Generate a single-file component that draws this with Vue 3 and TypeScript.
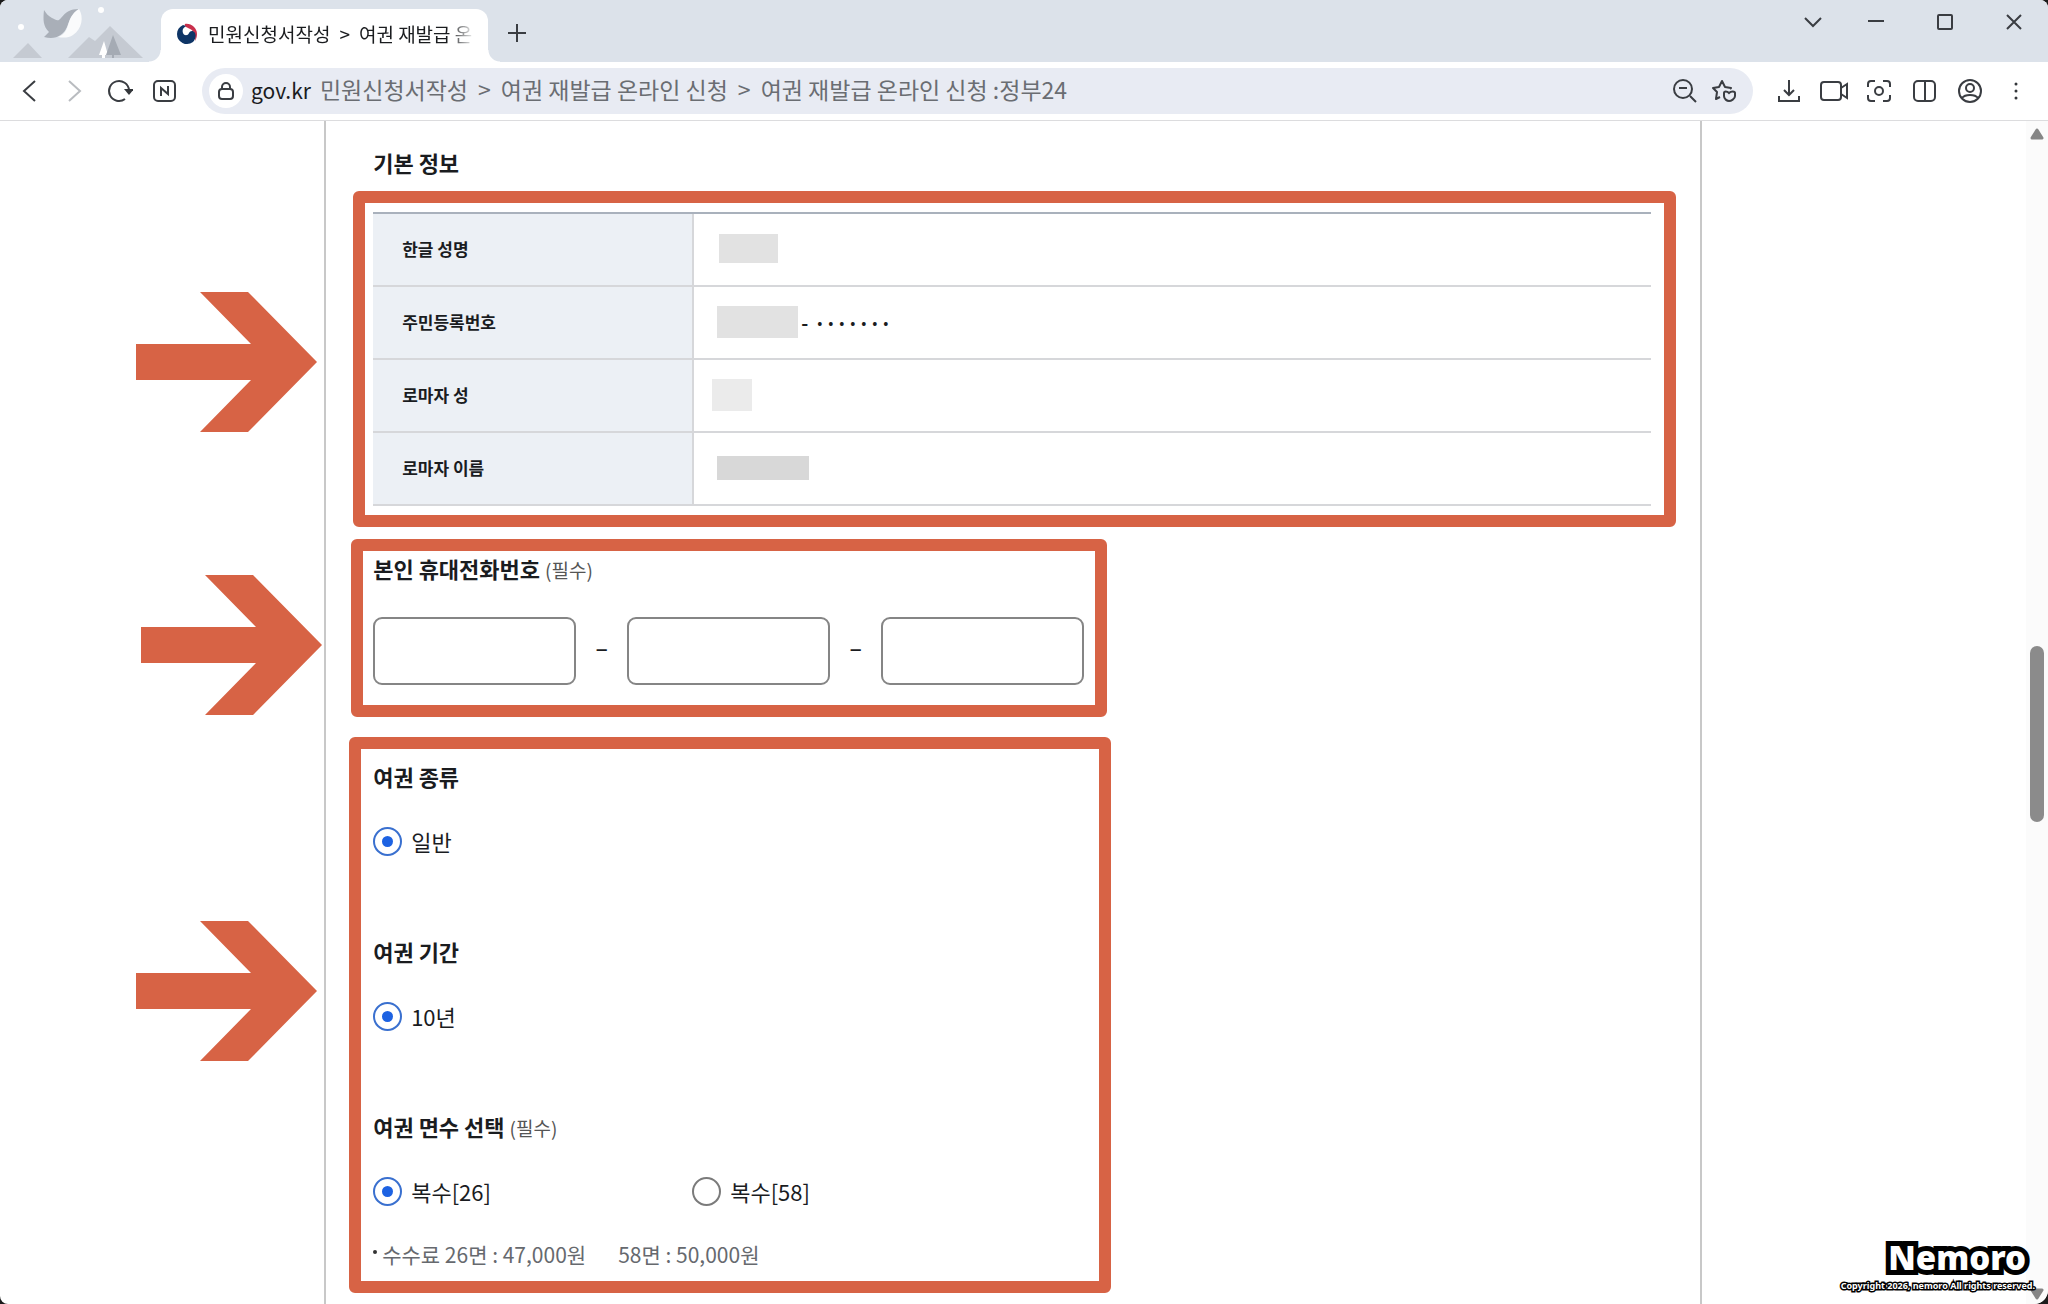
<script setup lang="ts">
import { ref } from 'vue'

interface InfoRow {
  label: string
  mask: string
  suffix?: boolean
}

const rows: InfoRow[] = [
  { label: '한글 성명', mask: 'mask-name' },
  { label: '주민등록번호', mask: 'mask-id', suffix: true },
  { label: '로마자 성', mask: 'mask-last' },
  { label: '로마자 이름', mask: 'mask-first' },
]

const phone = ref<string[]>(['', '', ''])
const phoneLabels = ['휴대전화번호 앞자리', '휴대전화번호 가운데자리', '휴대전화번호 끝자리']
const kind = ref('general')
const period = ref('10')
const pages = ref('26')
const arrowPoints = '0,52 115,52 64,0 112,0 181,70 112,140 64,140 115,88 0,88'
</script>

<template>
  <div class="window">
    <header class="tabstrip">
      <svg class="scene" width="161" height="62" viewBox="0 0 161 62" aria-hidden="true">
        <circle cx="101" cy="10" r="3" fill="#fff" />
        <circle cx="21" cy="27" r="3" fill="#fff" />
        <path d="M13 58L28 43L42 58Z" fill="#c5cad2" />
        <path d="M68 58L89 37L95 41L110 26L143 58Z" fill="#c5cad2" />
        <path d="M44 10C43 20 43 26 49 32L44 37C55 40 63 36 67 27C70 19 73 12 79 9C70 9 66 12 61 18C58 22 56 20 52 18C48 16 46 13 44 10Z" fill="#a9afb8" />
        <path d="M79 9C84 17 82 29 73 35C69 38 63 38 58 37C66 34 67 28 69 22C71 16 74 12 79 9Z" fill="#fafbfc" />
        <path d="M104 41L99 55H102V58H105V55H108Z" fill="#fff" />
        <path d="M113 35L106 55H112V58H114V55H121Z" fill="#a5abb4" />
      </svg>
      <div class="tab">
        <svg width="22" height="22" viewBox="0 0 22 22" aria-hidden="true">
          <path d="M9 1C15 0 21 5 21 11C21 14 20 16 19 18C20 12 18 7 12 5C10 4 8 3 9 1Z" fill="#c9304c" />
          <path d="M7 2C3 4 1 7 1 11A10 10 0 0 0 17 19C20 16 20 12 19 10C17 7 14 8 13 10C12 13 8 13 7 10C6 7 7 5 10 3Z" fill="#0e3566" />
        </svg>
        <span class="tab-title"><span>민원신청서작성</span><span>&gt;</span><span>여권 재발급 온</span></span>
      </div>
      <button class="new-tab" type="button" aria-label="새 탭">
        <svg width="20" height="20" viewBox="0 0 20 20"><path d="M10 1V19M1 10H19" /></svg>
      </button>
      <div class="controls">
        <button class="narrow" type="button" aria-label="탭 목록">
          <svg width="20" height="14" viewBox="0 0 20 14"><path d="M2 3L10 11L18 3" /></svg>
        </button>
        <button type="button" aria-label="최소화">
          <svg width="16" height="16" viewBox="0 0 16 16"><path d="M0 7H16" /></svg>
        </button>
        <button type="button" aria-label="최대화">
          <svg width="16" height="16" viewBox="0 0 16 16"><rect x="1" y="1" width="14" height="14" rx="1" /></svg>
        </button>
        <button type="button" aria-label="닫기">
          <svg width="16" height="16" viewBox="0 0 16 16"><path d="M1 1L15 15M15 1L1 15" /></svg>
        </button>
      </div>
    </header>

    <nav class="toolbar">
      <div class="tools">
        <button type="button" aria-label="뒤로">
          <svg width="28" height="28" viewBox="0 0 28 28"><path d="M20 4L9 14L20 24" /></svg>
        </button>
        <button type="button" aria-label="앞으로" class="dim">
          <svg width="28" height="28" viewBox="0 0 28 28"><path d="M9 4L20 14L9 24" /></svg>
        </button>
        <button type="button" aria-label="새로고침">
          <svg width="28" height="28" viewBox="0 0 28 28"><path d="M20 22A10 10 0 1 1 24 13" /><path d="M19 12H29L24 18Z" fill="#33363a" stroke="none" /></svg>
        </button>
        <button type="button" aria-label="네이버">
          <svg width="28" height="28" viewBox="0 0 28 28"><rect x="4" y="4" width="21" height="20" rx="4" /><path d="M11 19V11L18 17V9" /></svg>
        </button>
      </div>
      <div class="address">
        <span class="lock">
          <svg width="18" height="20" viewBox="0 0 18 20" aria-hidden="true"><rect x="2" y="8" width="14" height="10" rx="3" /><path d="M5 8V6A4 4 0 0 1 13 6V8" /></svg>
        </span>
        <span class="host">gov.kr</span>
        <span class="page-title">
          <span>민원신청서작성</span><span>&gt;</span><span>여권 재발급 온라인 신청</span><span>&gt;</span><span>여권 재발급 온라인 신청 :정부24</span>
        </span>
        <button type="button" aria-label="축소">
          <svg width="26" height="26" viewBox="0 0 26 26"><circle cx="12" cy="11" r="9" /><path d="M8 10H16M19 18L25 24" /></svg>
        </button>
        <button type="button" aria-label="즐겨찾기">
          <svg width="26" height="26" viewBox="0 0 26 26"><path d="M9 19L5 21L6 14L2 10L8 9L11 3L14 9L20 10L19 11" stroke-linejoin="round" /><path d="M13 15C13 13 16 13 18 15C20 13 24 13 24 15V18C24 21 20 23 18 23S13 21 13 18Z" /></svg>
        </button>
      </div>
      <div class="tools">
        <button type="button" aria-label="다운로드">
          <svg width="28" height="28" viewBox="0 0 28 28"><path d="M14 3V18M9 13L14 18L19 13M4 19V24H24V19" /></svg>
        </button>
        <button type="button" aria-label="화면 녹화">
          <svg width="28" height="28" viewBox="0 0 28 28"><rect x="1" y="5" width="20" height="18" rx="3" /><path d="M21 11L27 7V21L21 17" /></svg>
        </button>
        <button type="button" aria-label="화면 캡처">
          <svg width="28" height="28" viewBox="0 0 28 28"><path d="M3 10V7Q3 4 6 4H10M18 4H22Q25 4 25 7V10M25 18V21Q25 24 22 24H18M10 24H6Q3 24 3 21V18" /><circle cx="14" cy="14" r="4" /></svg>
        </button>
        <button type="button" aria-label="분할 화면">
          <svg width="28" height="28" viewBox="0 0 28 28"><rect x="4" y="4" width="21" height="20" rx="4" /><path d="M15 4V24" /></svg>
        </button>
        <button type="button" aria-label="프로필">
          <svg width="28" height="28" viewBox="0 0 28 28"><circle cx="15" cy="14" r="11" /><circle cx="15" cy="11" r="4" /><path d="M7 21C10 17 20 17 23 21" /></svg>
        </button>
        <button type="button" aria-label="메뉴">
          <svg width="28" height="28" viewBox="0 0 28 28"><g fill="#33363a" stroke="none"><circle cx="16" cy="7" r="1.500" /><circle cx="16" cy="14" r="1.500" /><circle cx="16" cy="21" r="1.500" /></g></svg>
        </button>
      </div>
    </nav>

    <div class="viewport">
      <div class="canvas">
        <main class="column">
          <h2 class="first-title">기본 정보</h2>

          <section class="mark mark-info">
            <svg class="arrow" width="181" height="140" viewBox="0 0 181 140" aria-hidden="true"><polygon :points="arrowPoints" /></svg>
            <table>
              <tbody>
                <tr v-for="row in rows" :key="row.label">
                  <th scope="row">{{ row.label }}</th>
                  <td>
                    <div class="value">
                      <span class="mask" :class="row.mask"></span>
                      <span v-if="row.suffix" class="hyphen">-</span>
                      <span v-if="row.suffix" class="dots"><span v-for="n in 7" :key="n">•</span></span>
                    </div>
                  </td>
                </tr>
              </tbody>
            </table>
          </section>

          <section class="mark mark-phone">
            <svg class="arrow" width="181" height="140" viewBox="0 0 181 140" aria-hidden="true"><polygon :points="arrowPoints" /></svg>
            <h2>본인 휴대전화번호 <span class="required">(필수)</span></h2>
            <div class="phone">
              <template v-for="(label, i) in phoneLabels" :key="label">
                <span v-if="i > 0" class="dash">–</span>
                <input v-model="phone[i]" type="text" :aria-label="label" />
              </template>
            </div>
          </section>

          <section class="mark mark-passport">
            <svg class="arrow" width="181" height="140" viewBox="0 0 181 140" aria-hidden="true"><polygon :points="arrowPoints" /></svg>
            <div class="group" role="radiogroup" aria-labelledby="t-kind">
              <h2 id="t-kind">여권 종류</h2>
              <div class="choices">
                <label><input v-model="kind" type="radio" name="kind" value="general" />일반</label>
              </div>
            </div>
            <div class="group" role="radiogroup" aria-labelledby="t-period">
              <h2 id="t-period">여권 기간</h2>
              <div class="choices">
                <label><input v-model="period" type="radio" name="period" value="10" />10년</label>
              </div>
            </div>
            <div class="group" role="radiogroup" aria-labelledby="t-pages">
              <h2 id="t-pages">여권 면수 선택 <span class="required">(필수)</span></h2>
              <div class="choices">
                <label><input v-model="pages" type="radio" name="pages" value="26" />복수[26]</label>
                <label><input v-model="pages" type="radio" name="pages" value="58" />복수[58]</label>
              </div>
            </div>
            <p class="fee"><span>수수료 26면 : 47,000원</span><span>58면 : 50,000원</span></p>
          </section>
        </main>
      </div>

      <div class="scrollbar" aria-hidden="true">
        <svg width="14" height="12" viewBox="0 0 14 12"><path d="M7 2L12 10H2Z" /></svg>
        <span class="space-above"></span>
        <span class="thumb"></span>
        <span class="space-below"></span>
        <svg width="14" height="12" viewBox="0 0 14 12"><path d="M7 10L12 2H2Z" /></svg>
      </div>
    </div>

    <div class="watermark">
      <strong>Nemoro</strong>
      <small>Copyright 2026, nemoro All rights reserved.</small>
    </div>
  </div>
</template>

<style>
body {
  margin: 0;
  background: #1b1b1b;
}
</style>

<style scoped>
* {
  box-sizing: border-box;
}
.window {
  position: relative;
  display: flex;
  flex-direction: column;
  min-height: 100vh;
  overflow: hidden;
  border-radius: 8px 8px 14px 8px;
  background: #fff;
  color: #1a1c1f;
  font-family: "Noto Sans CJK KR", sans-serif;
}
button {
  display: flex;
  align-items: center;
  justify-content: center;
  flex: none;
  padding: 0;
  border: 0;
  background: none;
}
svg {
  flex: none;
}
button svg,
.lock svg {
  fill: none;
  stroke: #3a3d42;
  stroke-width: 2;
}

.tabstrip {
  display: flex;
  height: 62px;
  background: #dce2ea;
}
.tab {
  position: relative;
  display: flex;
  align-items: center;
  gap: 10px;
  width: 327px;
  margin-top: 9px;
  padding: 0 13px 4px 15px;
  border-radius: 12px 12px 0 0;
  background: #fff;
}
.tab::before,
.tab::after {
  content: "";
  position: absolute;
  bottom: 0;
  width: 12px;
  height: 12px;
}
.tab::before {
  right: 100%;
  background: radial-gradient(circle at 0 0, transparent 11px, #fff 12px);
}
.tab::after {
  left: 100%;
  background: radial-gradient(circle at 100% 0, transparent 11px, #fff 12px);
}
.tab-title {
  display: flex;
  gap: 9px;
  flex: 1;
  white-space: nowrap;
  font-size: 19px;
  line-height: 28px;
  mask-image: linear-gradient(to right, #000 90%, transparent);
}
.new-tab {
  width: 36px;
  height: 36px;
  margin: 15px 0 0 11px;
}
.controls {
  display: flex;
  gap: 29px;
  height: 43px;
  margin-left: auto;
  padding-right: 14px;
}
.controls button {
  width: 40px;
}
.controls .narrow {
  width: 28px;
}

.toolbar {
  display: flex;
  align-items: center;
  height: 59px;
  padding: 0 20px 0 15px;
  border-bottom: 1px solid #dcdcde;
}
.tools {
  display: flex;
  gap: 17px;
}
.dim svg {
  stroke: #b9bcc0;
}
.address {
  display: flex;
  align-items: center;
  flex: 1;
  min-width: 0;
  height: 46px;
  margin: 0 22px 0 24px;
  padding: 0 16px 0 7px;
  border-radius: 23px;
  background: #e8ebf3;
}
.address button {
  margin-left: 14px;
}
.lock {
  display: flex;
  align-items: center;
  justify-content: center;
  flex: none;
  width: 34px;
  height: 34px;
  border-radius: 50%;
  background: #fff;
}
.host {
  margin: 0 9px 0 8px;
  padding-bottom: 2px;
  font-size: 21px;
  line-height: 32px;
}
.page-title {
  display: flex;
  gap: 10px;
  flex: 1;
  overflow: hidden;
  padding-bottom: 4px;
  white-space: nowrap;
  color: #6a6d72;
  font-size: 23px;
  line-height: 36px;
}

.viewport {
  display: flex;
  flex: 1;
}
.canvas {
  display: flex;
  justify-content: center;
  flex: 1;
}
.column {
  width: 68%;
  padding: 27px 24px 8px 23px;
  border: solid #c8c8c8;
  border-width: 0 2px;
}
h2 {
  margin: 0;
  padding-bottom: 4px;
  font-size: 22px;
  font-weight: 700;
  line-height: 28px;
}
.first-title {
  margin: 0 0 11px 24px;
}
.required {
  color: #555;
  font-size: 19px;
  font-weight: 400;
  line-height: 20px;
}
.mark {
  position: relative;
  border: 12px solid #d76345;
  border-radius: 6px;
}
.mark-info {
  margin-left: 4px;
  padding: 9px 13px 9px 8px;
}
.mark-phone {
  width: 756px;
  margin: 12px 0 0 2px;
  padding: 3px 10px 20px;
}
.mark-passport {
  width: 762px;
  margin-top: 20px;
  padding: 13px 12px 11px;
}
.arrow {
  position: absolute;
  fill: #d76345;
}
.mark-info .arrow {
  top: 89px;
  left: -229px;
}
.mark-phone .arrow {
  top: 24px;
  left: -222px;
}
.mark-passport .arrow {
  top: 172px;
  left: -225px;
}

table {
  width: 100%;
  border-collapse: separate;
  border-spacing: 0;
  border-top: 2px solid #a9b1bc;
}
th,
td {
  height: 73px;
  padding: 0 0 2px;
  border-bottom: 2px solid #d6d7da;
}
th {
  width: 321px;
  padding-left: 29px;
  border-right: 2px solid #d6d7da;
  background: #ecf0f5;
  font-size: 17px;
  font-weight: 700;
  line-height: 24px;
  text-align: left;
}
.value {
  display: flex;
  align-items: center;
  padding-left: 23px;
  font-size: 19px;
  line-height: 24px;
}
.mask {
  width: 81px;
  height: 32px;
  background: #e2e2e2;
}
.mask-name {
  width: 59px;
  height: 29px;
  margin-left: 2px;
}
.mask-last {
  width: 40px;
  margin-left: -5px;
  background: #ebebeb;
}
.mask-first {
  width: 92px;
  height: 24px;
  background: #d8d8d8;
}
.hyphen {
  margin: 0 6px 0 3px;
  font-weight: 700;
}
.dots {
  display: flex;
  font-size: 15px;
}
.dots span {
  width: 11px;
  text-align: center;
}

.phone {
  display: flex;
  margin-top: 31px;
}
.phone input {
  width: 203px;
  height: 68px;
  padding: 0 16px;
  border: 2px solid #858585;
  border-radius: 9px;
  background: #fff;
  font: inherit;
  font-size: 22px;
}
.dash {
  width: 51px;
  font-size: 23px;
  font-weight: 500;
  line-height: 60px;
  text-align: center;
}

.group + .group {
  margin-top: 80px;
}
.choices {
  display: flex;
  margin-top: 31px;
}
.choices label {
  display: flex;
  align-items: center;
  gap: 9px;
  width: 319px;
  font-size: 22px;
  line-height: 32px;
}
.choices input {
  display: grid;
  place-items: center;
  appearance: none;
  width: 29px;
  height: 29px;
  margin: 0;
  border: 2px solid #7b7b7b;
  border-radius: 50%;
  background: #fff;
}
.choices input:checked {
  border-color: #3a70cf;
}
.choices input:checked::before {
  content: "";
  width: 11px;
  height: 11px;
  border-radius: 50%;
  background: #1d62e2;
}
.fee {
  display: flex;
  align-items: center;
  gap: 32px;
  margin: 31px 0 0;
  color: #66696e;
  font-size: 21px;
  line-height: 32px;
}
.fee::before {
  content: "";
  width: 4px;
  height: 4px;
  margin: 0 -27px 4px 0;
  border-radius: 50%;
  background: #333;
}

.scrollbar {
  display: flex;
  flex-direction: column;
  align-items: center;
  width: 22px;
  padding: 7px 0 4px;
  background: #fbfbfb;
}
.scrollbar svg {
  fill: #868686;
  stroke: #868686;
  stroke-width: 3;
  stroke-linejoin: round;
}
.thumb {
  flex: 176;
  width: 14px;
  border-radius: 7px;
  background: #8b8b8b;
}
.space-above {
  flex: 506;
}
.space-below {
  flex: 466;
}

.watermark {
  position: absolute;
  right: 13px;
  bottom: 10px;
  display: flex;
  flex-direction: column;
  align-items: flex-end;
  color: #fff;
  font-family: "Noto Sans", sans-serif;
  font-weight: 700;
  -webkit-text-stroke-color: #000;
  paint-order: stroke fill;
  stroke-linejoin: round;
}
.watermark strong {
  margin-right: 9px;
  font-size: 33px;
  line-height: 40px;
  -webkit-text-stroke-width: 10px;
}
.watermark small {
  font-size: 9px;
  line-height: 16px;
  -webkit-text-stroke-width: 3px;
}
</style>
